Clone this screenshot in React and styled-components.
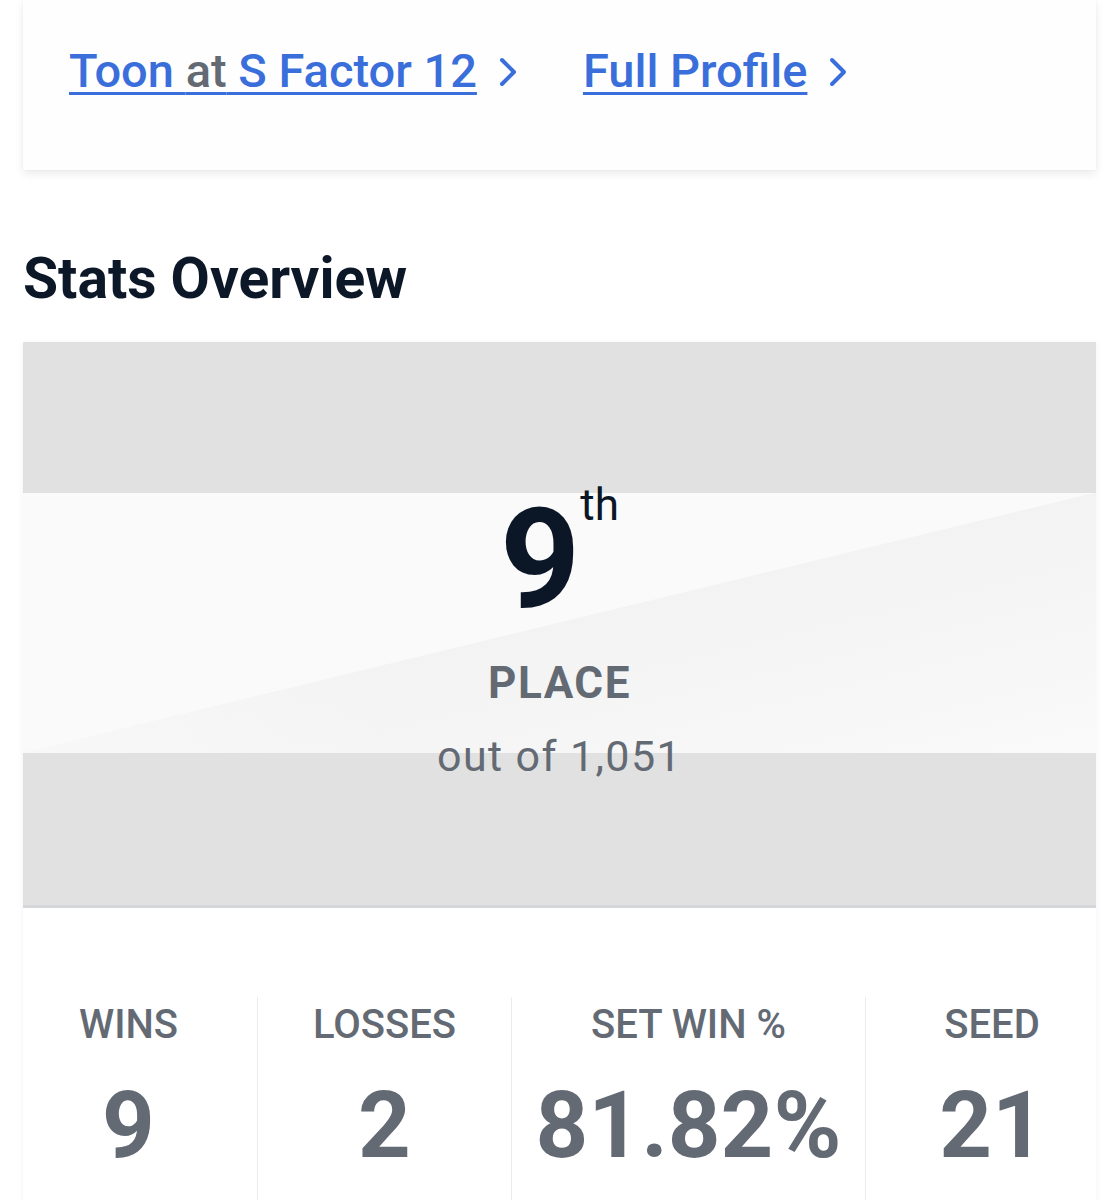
import React from "react";
import styled, { createGlobalStyle } from "styled-components";

const GlobalStyle = createGlobalStyle`
  html, body {
    margin: 0;
    padding: 0;
    background: #ffffff;
    font-family: "Roboto", "Liberation Sans", sans-serif;
  }
`;

const Page = styled.div`
  padding: 0 22px 0 23px;
  overflow: hidden;
`;

const LinksCard = styled.div`
  background: #fefefe;
  height: 170px;
  box-sizing: border-box;
  padding: 44px 46px 0;
  box-shadow: 0 4px 9px rgba(0, 0, 0, 0.08), 0 0 3px rgba(0, 0, 0, 0.04);
  display: flex;
  align-items: flex-start;
  column-gap: 64px;
`;

const LinkItem = styled.div`
  display: flex;
  align-items: center;
  column-gap: 21px;
  height: 54px;
`;

const LinkText = styled.a`
  font-size: 47px;
  line-height: 54px;
  font-weight: 500;
  color: #3a6fdb;
  text-decoration: underline;
  text-decoration-thickness: 3px;
  text-underline-offset: 5px;
  cursor: pointer;
  span {
    color: #636a74;
  }
`;

const Chevron = styled.svg`
  width: 21px;
  height: 30px;
  margin-top: 2px;
`;

const Heading = styled.h2`
  margin: 0;
  padding: 76px 0 0;
  font-size: 57px;
  line-height: 66px;
  font-weight: 700;
  color: #0c1828;
`;

const StatsCard = styled.div`
  margin-top: 30px;
  background: #ffffff;
  box-shadow: 0 1px 6px rgba(0, 0, 0, 0.06);
  padding-bottom: 40px;
`;

// light band with its faint diagonal split sits over the grey banner
const Hero = styled.div`
  padding: 147px 0 128px;
  border-bottom: 3px solid #d5d6d9;
  display: flex;
  flex-direction: column;
  align-items: center;
  background:
    linear-gradient(to right, rgba(250, 250, 250, 0.7) 0%, rgba(250, 250, 250, 0) 35%)
      0 151px / 100% 260px no-repeat,
    linear-gradient(to bottom right, #fafafa 49.8%, #f3f3f3 50%, #f6f6f6 75%, #fafafa 100%)
      0 151px / 100% 260px no-repeat,
    #e1e1e1;
`;

const Rank = styled.div`
  display: flex;
  align-items: flex-start;
  color: #0b1726;
`;

const RankNumber = styled.span`
  font-size: 140px;
  line-height: 140px;
  font-weight: 700;
`;

const RankSuffix = styled.span`
  font-size: 44px;
  line-height: 44px;
  font-weight: 400;
  margin-top: -6px;
`;

const PlaceLabel = styled.div`
  margin-top: 32px;
  font-size: 44px;
  line-height: 44px;
  font-weight: 700;
  letter-spacing: 1.5px;
  color: #636a74;
`;

const OutOf = styled.div`
  margin-top: 30px;
  font-size: 43px;
  line-height: 42px;
  font-weight: 400;
  letter-spacing: 1.4px;
  color: #636a74;
`;

const StatsRow = styled.div`
  margin: 89px -22px 0 -23px;
  display: grid;
  grid-template-columns: 257px 254px 354px 1fr;
`;

const StatCell = styled.div`
  display: flex;
  flex-direction: column;
  align-items: center;
  padding-top: 8px;
  height: 220px;
  border-left: ${(p) => (p.$first ? "none" : "1px solid #ececef")};
  color: #636a74;
`;

const StatLabel = styled.div`
  font-size: 40px;
  line-height: 40px;
  font-weight: 500;
`;

const StatValue = styled.div`
  margin-top: 35px;
  font-size: 92px;
  line-height: 92px;
  font-weight: 700;
`;

const ChevronIcon = () => (
  <Chevron viewBox="0 0 21 30" fill="none">
    <path
      d="M4 3 L16 15 L4 27"
      stroke="#3a6fdb"
      strokeWidth="4"
      strokeLinecap="round"
      strokeLinejoin="round"
    />
  </Chevron>
);

const stats = [
  { label: "WINS", value: "9" },
  { label: "LOSSES", value: "2" },
  { label: "SET WIN %", value: "81.82%" },
  { label: "SEED", value: "21" },
];

const App = () => {
  return (
    <>
      <GlobalStyle />
      <Page>
        <LinksCard>
          <LinkItem>
            <LinkText>
              Toon <span>at</span> S Factor 12
            </LinkText>
            <ChevronIcon />
          </LinkItem>
          <LinkItem>
            <LinkText>Full Profile</LinkText>
            <ChevronIcon />
          </LinkItem>
        </LinksCard>

        <Heading>Stats Overview</Heading>

        <StatsCard>
          <Hero>
            <Rank>
              <RankNumber>9</RankNumber>
              <RankSuffix>th</RankSuffix>
            </Rank>
            <PlaceLabel>PLACE</PlaceLabel>
            <OutOf>out of 1,051</OutOf>
          </Hero>
          <StatsRow>
            {stats.map((s, i) => (
              <StatCell key={s.label} $first={i === 0}>
                <StatLabel>{s.label}</StatLabel>
                <StatValue>{s.value}</StatValue>
              </StatCell>
            ))}
          </StatsRow>
        </StatsCard>
      </Page>
    </>
  );
};

export default App;
